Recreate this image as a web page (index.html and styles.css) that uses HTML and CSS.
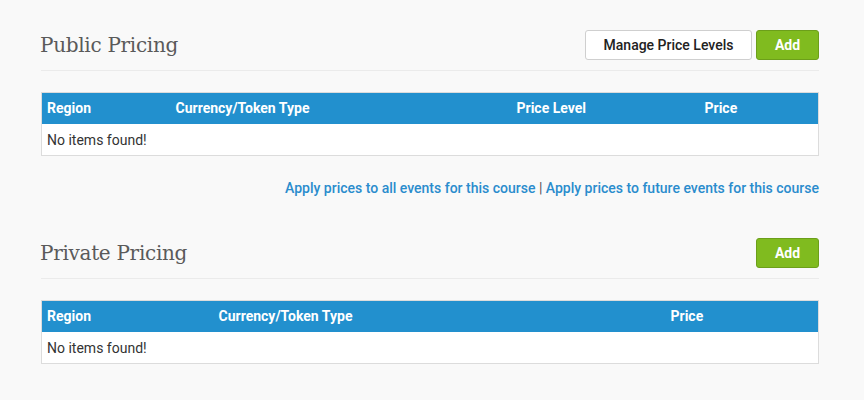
FILE: index.html
```html
<!DOCTYPE html>
<html>
<head>
<meta charset="utf-8">
<link rel="stylesheet" href="styles.css">
</head>
<body>
<div class="page">
  <section class="pricing">
    <div class="section-head">
      <h2 class="title">Public Pricing</h2>
      <div class="actions">
        <button class="btn btn-default">Manage Price Levels</button>
        <button class="btn btn-success">Add</button>
      </div>
    </div>
    <table class="grid grid-public">
      <thead>
        <tr><th class="c1">Region</th><th class="c2">Currency/Token Type</th><th class="c3">Price Level</th><th class="c4">Price</th></tr>
      </thead>
      <tbody>
        <tr><td colspan="4">No items found!</td></tr>
      </tbody>
    </table>
    <div class="apply-links">
      <a href="#">Apply prices to all events for this course</a> <span class="sep">|</span> <a href="#">Apply prices to future events for this course</a>
    </div>
  </section>
  <section class="pricing private">
    <div class="section-head">
      <h2 class="title">Private Pricing</h2>
      <div class="actions">
        <button class="btn btn-success">Add</button>
      </div>
    </div>
    <table class="grid grid-private">
      <thead>
        <tr><th class="p1">Region</th><th class="p2">Currency/Token Type</th><th class="p3">Price</th></tr>
      </thead>
      <tbody>
        <tr><td colspan="3">No items found!</td></tr>
      </tbody>
    </table>
  </section>
</div>
</body>
</html>
```
FILE: styles.css
```css
* { box-sizing: border-box; }
html, body { margin: 0; padding: 0; }
body {
  background: #f9f9f9;
  font-family: Roboto, "Liberation Sans", Arial, sans-serif;
  font-size: 14px;
  color: #333;
}
.page {
  width: 778px;
  margin-left: 41px;
  padding-top: 30px;
}
.section-head {
  display: flex;
  align-items: center;
  justify-content: space-between;
  padding-bottom: 10px;
  border-bottom: 1px solid #ebebeb;
}
.title {
  margin: 0 0 0 -1px;
  font-family: "DejaVu Serif", "Liberation Serif", serif;
  font-weight: normal;
  font-size: 20px;
  letter-spacing: -0.3px;
  color: #5a5a5a;
  line-height: 30px;
}
.actions { display: flex; gap: 4px; }
.btn {
  height: 30px;
  border-radius: 3px;
  font-family: Roboto, "Liberation Sans", Arial, sans-serif;
  font-size: 14px;
  font-weight: 500;
  padding: 0 10px;
  cursor: pointer;
}
.btn-default {
  background: #fff;
  border: 1px solid #cfcfcf;
  color: #222;
  width: 167px;
}
.btn-success {
  background: #80bb1f;
  border: 1px solid #6c9f1a;
  color: #fff;
  font-weight: 700;
  width: 63px;
}
.grid {
  width: 778px;
  margin-top: 21px;
  border-collapse: collapse;
  border: 1px solid #dcdcdc;
  background: #fff;
}
.grid th {
  background: #2290ce;
  color: #fff;
  font-weight: 700;
  text-align: left;
  height: 31px;
  padding: 0 6px 0 5px;
}
.grid td {
  height: 32px;
  padding: 1px 6px 0 5px;
  color: #333;
}
.c1 { width: 129px; }
.c2 { width: 341px; }
.c3 { width: 188px; }
.p1 { width: 172px; }
.p2 { width: 452px; }
.apply-links {
  text-align: right;
  margin-top: 23px;
  line-height: 18px;
  font-weight: 500;
}
.apply-links a { color: #2a8ccd; text-decoration: none; }
.apply-links .sep { color: #555; font-weight: 400; }
.private { margin-top: 41px; }
```
